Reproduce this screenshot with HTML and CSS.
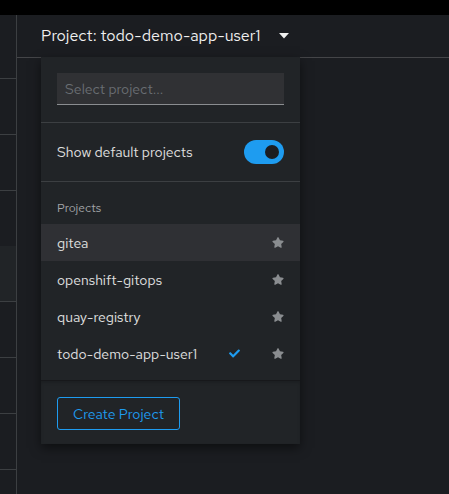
FILE: index.html
```html
<!DOCTYPE html>
<html>
<head>
<meta charset="utf-8">
<link rel="stylesheet" href="styles.css">
</head>
<body>
<div class="topbar"></div>
<div class="main">
  <nav class="sidebar">
    <div class="nav-item first"></div>
    <div class="nav-item"></div>
    <div class="nav-item"></div>
    <div class="nav-item plain"></div>
    <div class="nav-item active"></div>
    <div class="nav-item"></div>
    <div class="nav-item"></div>
    <div class="nav-item"></div>
  </nav>
  <div class="content">
    <header class="page-header">
      <button class="project-toggle">
        <span class="project-label">Project: todo-demo-app-user1</span>
        <svg class="caret" width="10" height="6" viewBox="0 0 10 6"><path d="M0 0H10L5 5.5Z" fill="#f0f0f0"/></svg>
      </button>
    </header>
    <div class="menu">
      <div class="menu-search">
        <div class="search-input">Select project...</div>
      </div>
      <div class="menu-toggle-row">
        <span>Show default projects</span>
        <span class="switch"><span class="knob"></span></span>
      </div>
      <div class="menu-group">
        <div class="group-title">Projects</div>
        <ul class="menu-list">
          <li class="menu-item hovered"><span class="item-text">gitea</span><svg class="star" viewBox="0 0 576 512"><path d="M259.3 17.8L194 150.2 47.9 171.5c-26.2 3.8-36.7 36.1-17.7 54.6l105.7 103-25 145.5c-4.5 26.300 23.2 46 46.4 33.7L288 439.6l130.7 68.7c23.2 12.2 50.9-7.4 46.4-33.7l-25-145.5 105.7-103c19-18.5 8.5-50.8-17.7-54.6L382 150.2 316.7 17.8c-11.7-23.6-45.6-23.9-57.4 0z"/></svg></li>
          <li class="menu-item"><span class="item-text">openshift-gitops</span><svg class="star" viewBox="0 0 576 512"><path d="M259.3 17.8L194 150.2 47.9 171.5c-26.2 3.8-36.7 36.1-17.7 54.6l105.7 103-25 145.5c-4.5 26.3 23.2 46 46.4 33.7L288 439.6l130.7 68.7c23.2 12.2 50.9-7.4 46.4-33.7l-25-145.5 105.7-103c19-18.5 8.5-50.8-17.7-54.6L382 150.2 316.7 17.8c-11.7-23.6-45.6-23.9-57.4 0z"/></svg></li>
          <li class="menu-item"><span class="item-text">quay-registry</span><svg class="star" viewBox="0 0 576 512"><path d="M259.3 17.8L194 150.2 47.9 171.5c-26.2 3.8-36.7 36.1-17.7 54.6l105.7 103-25 145.5c-4.5 26.3 23.2 46 46.4 33.7L288 439.6l130.7 68.7c23.2 12.2 50.9-7.4 46.4-33.7l-25-145.5 105.7-103c19-18.5 8.5-50.8-17.7-54.6L382 150.2 316.7 17.8c-11.7-23.6-45.6-23.9-57.4 0z"/></svg></li>
          <li class="menu-item"><span class="item-text">todo-demo-app-user1</span><svg class="check" viewBox="0 0 512 512"><path d="M173.9 439.4l-166.4-166.4c-10-10-10-26.2 0-36.2l36.2-36.2c10-10 26.2-10 36.2 0L192 312.7 432.1 72.6c10-10 26.2-10 36.2 0l36.2 36.2c10 10 10 26.2 0 36.2L210.1 439.4c-10 10-26.2 10-36.2 0z"/></svg><svg class="star" viewBox="0 0 576 512"><path d="M259.3 17.8L194 150.2 47.9 171.5c-26.2 3.8-36.7 36.1-17.7 54.6l105.7 103-25 145.5c-4.5 26.3 23.2 46 46.4 33.7L288 439.6l130.7 68.7c23.2 12.2 50.9-7.4 46.4-33.7l-25-145.5 105.7-103c19-18.5 8.5-50.8-17.7-54.6L382 150.2 316.7 17.8c-11.7-23.6-45.6-23.9-57.4 0z"/></svg></li>
        </ul>
      </div>
      <div class="menu-footer">
        <button class="btn-secondary">Create Project</button>
      </div>
    </div>
  </div>
</div>
</body>
</html>
```
FILE: styles.css
```css
* { box-sizing: border-box; }
html, body { margin: 0; padding: 0; }
body {
  background: #1b1d21;
  font-family: "Red Hat Text", "Open Sans", "Liberation Sans", sans-serif;
  color: #e0e0e0;
  width: 449px;
  height: 494px;
  overflow: hidden;
}
.topbar { height: 15px; background: #000; }
.main { display: flex; height: 479px; }
.sidebar {
  width: 17px;
  border-right: 1px solid #3c3f42;
  display: flex;
  flex-direction: column;
}
.nav-item { height: 56px; border-bottom: 1px solid #3c3f42; flex: none; }
.nav-item.first { height: 64px; }
.nav-item.plain { height: 55px; border-bottom: none; }
.nav-item.active { background: #212427; }
.content { flex: 1; position: relative; }
.page-header {
  height: 43px;
  border-bottom: 1px solid #444548;
  display: flex;
  align-items: center;
  padding-left: 24px;
}
.project-toggle {
  background: none;
  border: none;
  padding: 0;
  display: flex;
  align-items: center;
  gap: 19px;
  color: #f0f0f0;
  font-family: inherit;
  font-size: 16px;
  margin-top: -1px;
}
.caret { display: block; margin-top: 1px; }
.menu {
  position: absolute;
  left: 24px;
  top: 42px;
  width: 259px;
  height: 387px;
  background: #212427;
  box-shadow: 0 4px 10px rgba(0, 0, 0, 0.5);
  display: flex;
  flex-direction: column;
  font-size: 14px;
}
.menu-search { padding: 16px 16px 17px; border-bottom: 1px solid #3c3f42; }
.search-input {
  height: 32px;
  background: #303134;
  border-bottom: 1px solid #8a8d90;
  color: #6a6e73;
  padding: 0 8px;
  display: flex;
  align-items: center;
  font-size: 14px;
}
.menu-toggle-row {
  height: 59px;
  padding: 0 16px;
  border-bottom: 1px solid #3c3f42;
  display: flex;
  align-items: center;
  justify-content: space-between;
  color: #e0e0e0;
}
.switch {
  width: 40px;
  height: 24px;
  border-radius: 12px;
  background: #1e9cf0;
  display: flex;
  align-items: center;
  justify-content: flex-end;
  padding-right: 5px;
}
.knob { width: 14px; height: 14px; border-radius: 50%; background: #1b1d21; }
.menu-group { flex: 1; }
.group-title {
  height: 42px;
  padding: 18px 16px 0;
  font-size: 12px;
  color: #a3a6a9;
}
.menu-list { list-style: none; margin: 0; padding: 0; }
.menu-item {
  height: 37px;
  display: flex;
  align-items: center;
  padding: 0 16px;
  color: #e0e0e0;
}
.menu-item.hovered { background: #2f3034; }
.item-text { flex: 1; }
.star { width: 12px; height: 11px; fill: #8a8d90; }
.check { width: 13px; height: 11px; fill: #1e9cf0; margin-right: 31px; }
.menu-footer {
  height: 64px;
  border-top: 1px solid #17181b;
  box-shadow: inset 0 2px 3px rgba(0, 0, 0, 0.15);
  padding: 16px;
}
.btn-secondary {
  height: 33px;
  padding: 0 15px;
  background: transparent;
  border: 1px solid #1e9cf0;
  border-radius: 3px;
  color: #1e9cf0;
  font-family: inherit;
  font-size: 14px;
  width: 123px;
}
```
